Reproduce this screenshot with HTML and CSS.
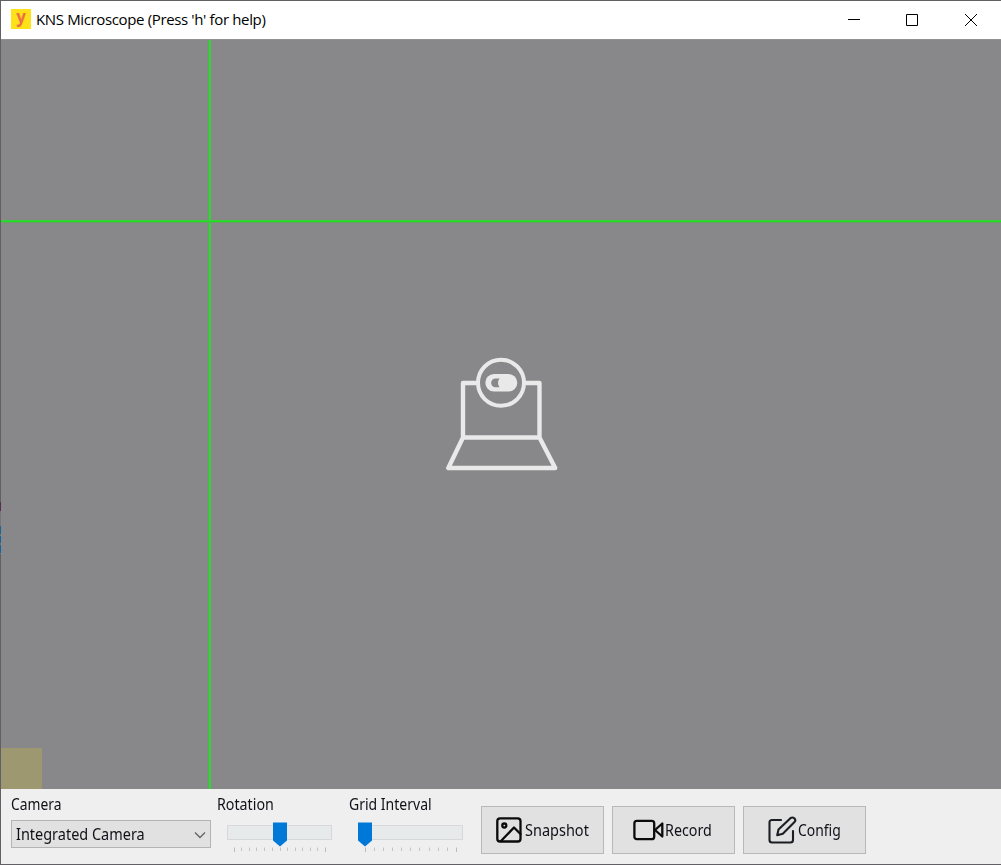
FILE: index.html
```html
<!DOCTYPE html>
<html lang="en">
<head>
<meta charset="utf-8">
<title>KNS Microscope</title>
<link rel="stylesheet" href="styles.css">
</head>
<body>
<div class="window">
  <header class="titlebar">
    <span class="app-icon">y</span>
    <span class="title">KNS Microscope (Press 'h' for help)</span>
    <svg class="controls" width="147" height="38" viewBox="0 0 147 38" fill="none" stroke="#000">
      <path d="M0 18.500H12M58.500 13.500h11v11h-11zM117 13l12 12M129 13l-12 12"/>
    </svg>
  </header>
  <main class="view">
    <svg class="camera-off" width="140" height="140" viewBox="0 0 140 140" fill="none" stroke="#e9e9e9" stroke-width="4.400" stroke-linejoin="round">
      <path d="M48 38H33V92.500H109.500V38H95M33 92.500L18.300 123H125.200L109.500 92.500"/>
      <circle cx="71" cy="37.800" r="23" stroke-width="4"/>
      <rect x="55.300" y="29" width="32" height="17.500" rx="8.700" fill="#e9e9e9" stroke="none"/>
      <path d="M69.500 33.500h-4a4.300 4.300 0 0 0 0 8.700h4q-3-4.300 0-8.700z" fill="#88888a" stroke="none"/>
    </svg>
    <div class="line-v"></div>
    <div class="line-h"></div>
    <div class="swatch"></div>
    <div class="edge"></div>
  </main>
  <footer class="toolbar">
    <section class="field camera">
      <label class="t-camera">Camera</label>
      <div class="select"><span class="t-select">Integrated Camera</span>
        <svg class="chevron" width="12" height="8" viewBox="0 0 12 8" fill="none" stroke="#666" stroke-width="1.400"><path d="M1 1.500l5 5 5-5"/></svg>
      </div>
    </section>
    <section class="field rotation">
      <label class="t-rotation">Rotation</label>
      <svg class="slider" width="108" height="32" viewBox="0 0 108 32">
        <rect x=".5" y="3.500" width="104" height="14" fill="#e6eaea" stroke="#d8d8d8"/>
        <path d="M46 .5h14v18l-7 6-7-6z" fill="#0078d7"/>
        <path d="M7.500 25.500v4.500M98.500 25.500v4.500" stroke="#bcbcbc" />
        <path d="M14.500 25.500v3.500M22.500 25.500v3.500M29.500 25.500v3.500M37.500 25.500v3.500M45.500 25.500v3.500M53.500 25.500v3.500M60.500 25.500v3.500M68.500 25.500v3.500M75.500 25.500v3.500M83.500 25.500v3.500M90.500 25.500v3.500" stroke="#c4c4c4"/>
      </svg>
    </section>
    <section class="field grid">
      <label class="t-grid">Grid Interval</label>
      <svg class="slider" width="108" height="32" viewBox="0 0 108 32">
        <rect x=".5" y="3.500" width="104" height="14" fill="#e6eaea" stroke="#d8d8d8"/>
        <path d="M0 .5h14v18l-7 6-7-6z" fill="#0078d7"/>
        <path d="M7.500 25.500v4.500M98.500 25.500v4.500" stroke="#bcbcbc"/>
        <path d="M16.500 25.500v3.500M25.500 25.500v3.500M34.500 25.500v3.500M43.500 25.500v3.500M52.500 25.500v3.500M61.500 25.500v3.500M71.500 25.500v3.500M80.500 25.500v3.500M89.500 25.500v3.500" stroke="#c4c4c4"/>
      </svg>
    </section>
    <div class="buttons">
      <div class="button snapshot">
        <svg width="26" height="26" viewBox="0 0 26 26" fill="none" stroke="#0b0b0b" stroke-width="2.300" stroke-linejoin="round" stroke-linecap="round">
          <rect x="1.300" y="1.300" width="23.200" height="23.200" rx="2.800"/><circle cx="8.300" cy="8.500" r="2"/><path d="M5 24L18 10.500L24.500 17"/>
        </svg>
        <span class="t-snapshot">Snapshot</span>
      </div>
      <div class="button record">
        <svg width="31" height="22" viewBox="0 0 31 22" fill="none" stroke="#0b0b0b" stroke-width="2.300" stroke-linejoin="round">
          <rect x="1.400" y="1.800" width="19.800" height="18.400" rx="2.500"/><path d="M22 11L29.300 4.500V17.500z"/>
        </svg>
        <span class="t-record">Record</span>
      </div>
      <div class="button config">
        <svg width="29" height="28" viewBox="0 0 29 28" fill="none" stroke="#1b1f23" stroke-width="2.100" stroke-linejoin="round" stroke-linecap="round">
          <path d="M13 4H4Q1.500 4 1.500 6.500V24Q1.500 26.500 4 26.500H22.500Q25 26.500 25 24V15"/>
          <path d="M9.200 19.200L10.500 13.500L22.400 2.200Q24.400.7 26.300 2.300Q28.200 4.200 26.500 6.100L14.800 17.800z"/>
        </svg>
        <span class="t-config">Config</span>
      </div>
    </div>
  </footer>
</div>
</body>
</html>
```
FILE: styles.css
```css
* { box-sizing: border-box; }
body { margin: 0; overflow: hidden; font: 16px/20px "Noto Sans", sans-serif; color: #101018; }
.window { width: 1001px; height: 865px; display: flex; flex-direction: column; border: solid #626065; border-width: 1px 0 1px 1px; }
.titlebar { height: 38px; flex: none; display: flex; align-items: center; background: #fff; padding: 0 0 2px 10px; }
.app-icon { width: 20px; height: 20px; background: #ffe119; color: #ed7044; font: bold 17px/15px "Open Sans", sans-serif; text-align: center; margin-right: 5px; }
.title { font: 15px/20px "Open Sans", sans-serif; color: #000; white-space: nowrap; letter-spacing: -.36px; }
.controls { margin: 2px 6px 0 auto; }
.view { flex: 1; position: relative; background: #88888a; display: flex; padding: 305px 0 0 429px; border-top: 1px solid #929294; }
.camera-off { filter: blur(.5px); }
.line-v { position: absolute; left: 207px; top: 0; width: 3px; height: 100%; background: linear-gradient(90deg, #5fa85f 33.3%, #2bdc2b 33.3%, #2bdc2b 66.6%, #38d038 66.6%); }
.line-h { position: absolute; left: 0; top: 180px; width: 100%; height: 3px; background: linear-gradient(#38d038 33.3%, #20df20 33.3%, #20df20 66.6%, #62a362 66.6%); }
.swatch { position: absolute; left: 0; bottom: 0; width: 41px; height: 41px; background: #9e9870; }
/* Slivers of the desktop showing along the window's left edge */
.edge { position: absolute; left: -1px; top: 462px; width: 1px; height: 52px; background: linear-gradient(#572a58 9px, #77777a 9px, #77777a 24px, #17659b 24px, #17659b 32px, #77777a 32px, #77777a 34px, #17659b 34px, #17659b 41px, #77777a 41px, #77777a 43px, #17659b 43px, #17659b 51px, #77777a 51px); }
.toolbar { height: 75px; flex: none; display: flex; background: #efefef; padding: 5px 0 0 10px; }
.toolbar label, .toolbar span { display: block; width: max-content; white-space: nowrap; transform-origin: left center; }
.field label { height: 20px; }
.camera { width: 206px; }
.select { width: 200px; height: 28px; margin-top: 6px; border: 1px solid #b4b4b4; background: #e1e1e1; display: flex; align-items: center; padding: 0 4px; }
.chevron { margin: 1px 0 0 auto; }
.rotation { width: 132px; }
.grid { width: 132px; }
.slider { display: block; margin: 8px 0 0 10px; }
.grid .slider { margin-left: 9px; }
.buttons { display: flex; gap: 8px; padding-top: 12px; }
.button { width: 123px; height: 48px; border: 1px solid #b8b8b8; background: #e1e1e1; display: flex; align-items: center; }
.snapshot { padding-left: 14px; }
.snapshot span { margin-left: 3px; }
.record { padding-left: 20px; }
.record span { margin-left: 1px; }
.config { padding-left: 24px; }
.config svg { flex: none; }
.config span { margin-left: 1px; }
.t-camera { transform: scaleX(.865); }
.t-select { transform: scaleX(.904); }
.t-rotation { transform: scaleX(.89); }
.t-grid { transform: scaleX(.876); }
.t-snapshot { transform: scaleX(.906); }
.t-record { transform: scaleX(.892); }
.t-config { transform: scaleX(.87); }
```
